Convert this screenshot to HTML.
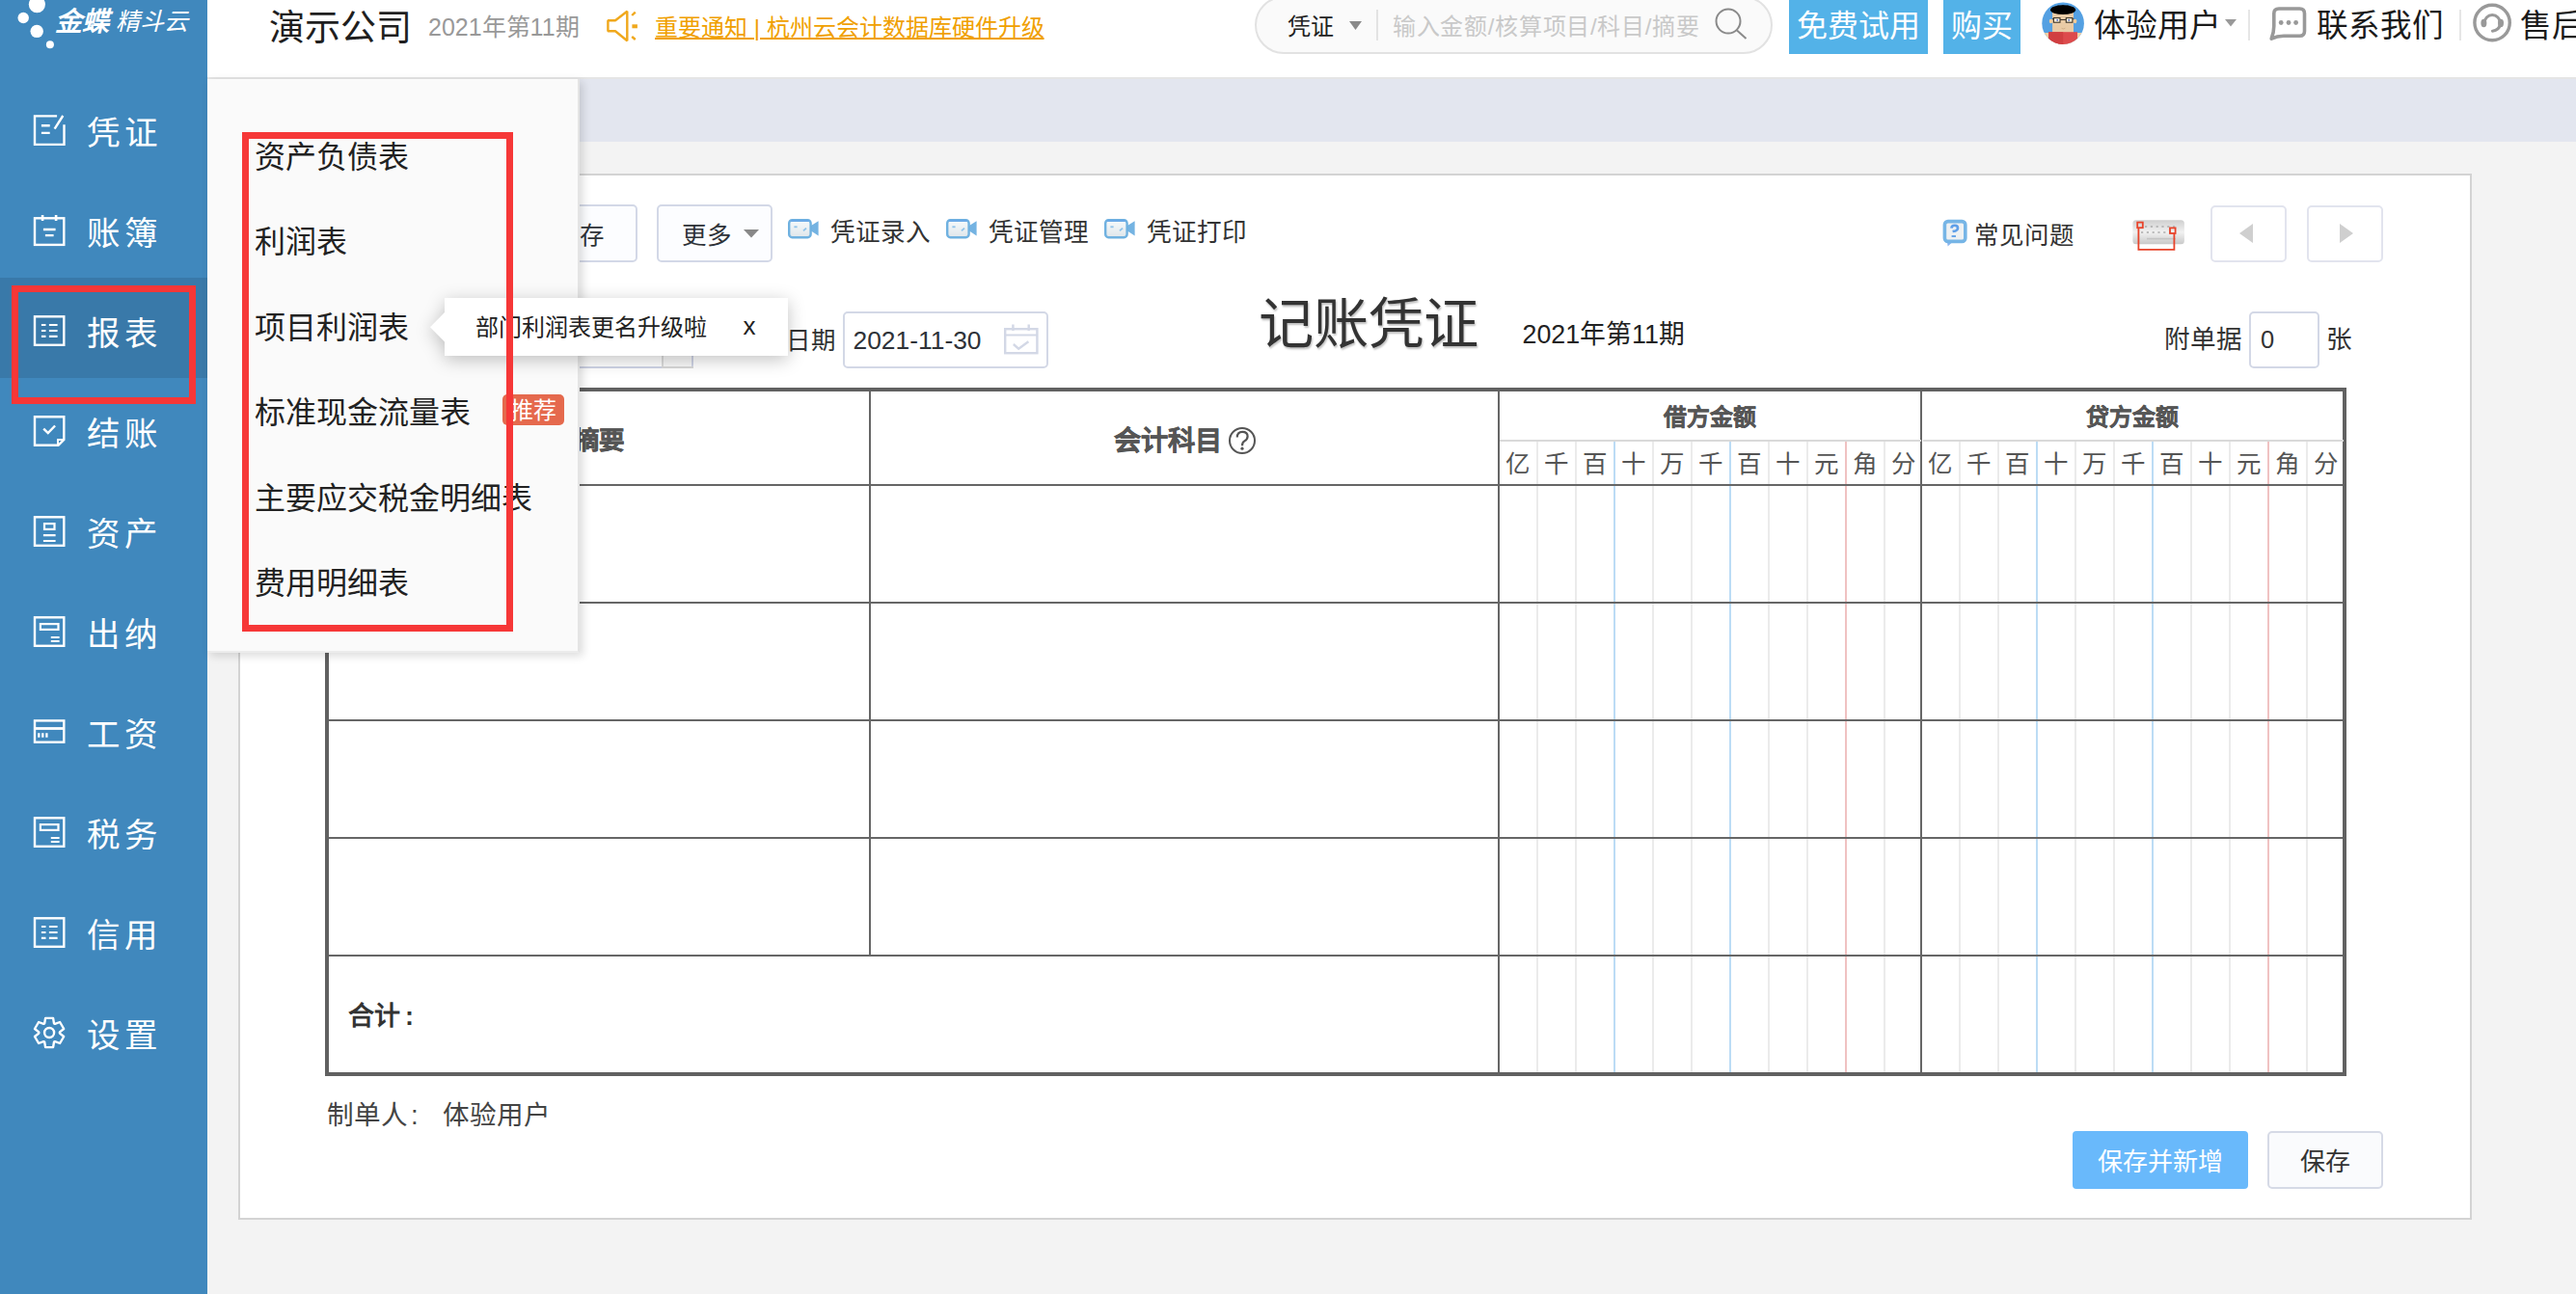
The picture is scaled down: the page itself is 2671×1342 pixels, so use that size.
<!DOCTYPE html>
<html lang="zh-CN">
<head>
<meta charset="utf-8">
<title>记账凭证</title>
<style>
*{box-sizing:border-box;margin:0;padding:0}
html,body{width:2671px;height:1342px;overflow:hidden;background:#f3f3f3;font-family:"Liberation Sans",sans-serif;color:#222}
body{position:relative}
.t{position:absolute;white-space:nowrap;line-height:1;transform:translateY(-50%)}
svg{position:absolute;overflow:visible}
/* sidebar */
#side{position:absolute;left:0;top:0;width:215px;height:1342px;background:#4088bd}
#side .act{position:absolute;left:0;top:288px;width:215px;height:104px;background:#3979a9}
#side .it{position:absolute;left:89.5px;font-size:34.5px;letter-spacing:5.5px;color:#fff;line-height:1;transform:translateY(-50%);white-space:nowrap}
#side svg.ic{left:34px;width:34px;height:34px;fill:none;stroke:#fff;stroke-width:2.4}
/* header */
#head{position:absolute;left:215px;top:0;width:2456px;height:82px;background:#fff;border-bottom:2px solid #e5e5e5}
#tabbar{position:absolute;left:215px;top:82px;width:2456px;height:65px;background:#e3e6ef}
#panel{position:absolute;left:247px;top:180px;width:2316px;height:1085px;background:#fff;border:2px solid #d3d3d3}
.btn{position:absolute;border:2px solid #d3d8e7;border-radius:5px;background:#fcfdff}
/* table */
.hl{position:absolute;height:2px;background:#666}
.vl{position:absolute;width:2px;background:#666}
.gl{position:absolute;width:2px;top:458px;height:654px;background:#ebebeb}
.gl.b{background:#bcdcf5}
.gl.r{background:#f0c2c2}
.u{position:absolute;top:482px;font-size:25.5px;color:#555;line-height:1;transform:translate(-50%,-50%)}
/* menu */
#menu{position:absolute;left:215px;top:82px;width:386px;height:595px;background:#fafafa;border-right:2px solid #e4e4e4;border-bottom:2px solid #ececec;box-shadow:3px 3px 9px rgba(0,0,0,.15)}
#menu .mi{position:absolute;left:49px;font-size:32px;color:#222;line-height:1;transform:translateY(-50%);white-space:nowrap}
.red{position:absolute;border:7px solid #f63737}
</style>
</head>
<body>
<div id="tabbar"></div>
<div id="panel"></div>
<!-- toolbar row -->
<div class="btn" style="left:541px;top:212px;width:120px;height:60px"></div>
<div class="t" style="left:575px;top:244.5px;font-size:25.5px;color:#2e3238">保存</div>
<div class="btn" style="left:681px;top:212px;width:120px;height:60px"></div>
<div class="t" style="left:706.5px;top:244.5px;font-size:25.5px;color:#2e3238">更多</div>
<svg style="left:771px;top:238px;width:16px;height:9px" viewBox="0 0 16 9"><path d="M0,0 H16 L8,8.4 Z" fill="#888"/></svg>
<svg width="0" height="0" style="left:0;top:0"><defs>
<linearGradient id="vg" x1="0" y1="0" x2="0" y2="1"><stop offset="0" stop-color="#f7fafc"/><stop offset="1" stop-color="#dfe6ea"/></linearGradient>
<g id="vid"><path d="M24,7 L31.6,2.2 V17.4 L24,12.6 Z" fill="#74b3e2"/><rect x="1.2" y="1.2" width="22.4" height="18" rx="3.2" fill="url(#vg)" stroke="#6fb1e0" stroke-width="2.4"/><path d="M3,2 H22" stroke="#6aa9e6" stroke-width="2"/><path d="M6.4,8.3 H9.6" stroke="#8fc3ea" stroke-width="1.8"/><path d="M16,12.4 L19,9.6" stroke="#8fc3ea" stroke-width="1.8"/></g>
</defs></svg>
<svg style="left:817px;top:227px;width:32px;height:21px" viewBox="0 0 32 21"><use href="#vid"/></svg>
<div class="t" style="left:860.7px;top:242.3px;font-size:25.6px;color:#333">凭证录入</div>
<svg style="left:981px;top:227px;width:32px;height:21px" viewBox="0 0 32 21"><use href="#vid"/></svg>
<div class="t" style="left:1024.7px;top:242.3px;font-size:25.6px;color:#333">凭证管理</div>
<svg style="left:1145px;top:227px;width:32px;height:21px" viewBox="0 0 32 21"><use href="#vid"/></svg>
<div class="t" style="left:1188.7px;top:242.3px;font-size:25.6px;color:#333">凭证打印</div>
<!-- right tools -->
<svg style="left:2014px;top:227px;width:27px;height:30px" viewBox="2014 227 27 30">
<path d="M2019,250 L2019.6,255.4 L2025.6,250 Z" fill="#8ab4f0"/>
<rect x="2016.4" y="229.6" width="21.4" height="20.8" rx="3.4" fill="#eef1f3" stroke="#76b5e6" stroke-width="3.6"/>
<path d="M2023.4,236.6 Q2023.6,233.8 2026.8,233.8 Q2030,233.8 2030,236.6 Q2030,238.6 2027.6,239.4 L2024.6,240" fill="none" stroke="#5f9fe8" stroke-width="2.6"/>
<path d="M2023.6,245 H2028" stroke="#6aa6e8" stroke-width="2"/>
</svg>
<div class="t" style="left:2047px;top:244.8px;font-size:25.5px;color:#333">常见问题</div>
<svg style="left:2210px;top:226px;width:58px;height:36px" viewBox="2210 226 58 36">
<defs><linearGradient id="kg" x1="0" y1="0" x2="0" y2="1"><stop offset="0" stop-color="#cfcfcf"/><stop offset=".5" stop-color="#f1f1f1"/><stop offset="1" stop-color="#c9c9c9"/></linearGradient></defs>
<rect x="2211.4" y="228.3" width="53.5" height="25" rx="3.5" fill="url(#kg)"/>
<path d="M2224,235 H2258 M2220,241 H2252" stroke="#aaa" stroke-width="1.6" stroke-dasharray="2.2 3.6"/>
<path d="M2226,247.6 H2256" stroke="#c4c4c4" stroke-width="1.6"/>
<g fill="none" stroke="#e8432a" stroke-width="1.8"><rect x="2216.2" y="230.6" width="5.6" height="5.6"/><rect x="2250" y="236.4" width="5.6" height="5.6"/><path d="M2217.4,236.2 V258.8 H2254.4 V242"/></g>
</svg>
<div class="btn" style="left:2291.5px;top:212.5px;width:79px;height:59px;border-color:#e2e4ee;background:#fff"></div>
<svg style="left:2322px;top:232px;width:14px;height:20px" viewBox="0 0 14 20"><path d="M14,0 V20 L0,10 Z" fill="#cfcfcf"/></svg>
<div class="btn" style="left:2391.5px;top:212.5px;width:79px;height:59px;border-color:#e2e4ee;background:#fff"></div>
<svg style="left:2426px;top:232px;width:14px;height:20px" viewBox="0 0 14 20"><path d="M0,0 V20 L14,10 Z" fill="#cfcfcf"/></svg>
<!-- voucher header row -->
<div class="btn" style="left:560px;top:323px;width:159px;height:59px;border-color:#cfd4e6;background:#fff;border-radius:4px"></div>
<div style="position:absolute;left:686px;top:325px;width:31px;height:55px;background:#f9f9f9;border-left:2px solid #dcdcdc"></div>
<div style="position:absolute;left:686px;top:380px;width:33px;height:2px;background:#d8d8d8"></div>
<svg style="left:696px;top:350px;width:13px;height:8px" viewBox="0 0 13 8"><path d="M0,0 H13 L6.5,8 Z" fill="#999"/></svg>
<div class="t" style="left:814.5px;top:353.5px;font-size:25.5px;color:#333">日期</div>
<div class="btn" style="left:873.5px;top:322.5px;width:213px;height:59px;background:#fff;border-color:#d3d8e6"></div>
<div class="t" style="left:884.5px;top:353px;font-size:26.4px;color:#2e3238">2021-11-30</div>
<svg style="left:1040px;top:335px;width:38px;height:34px" viewBox="1040 335 38 34" fill="none" stroke="#d3d8e6" stroke-width="2.4">
<rect x="1042.2" y="341.2" width="33.2" height="25"/><path d="M1042.2,347.4 H1075.4" stroke-width="2"/><path d="M1050.4,336.6 V343 M1066.7,336.6 V343"/><path d="M1050.8,357 L1056.2,361.6 L1066.4,354.2"/>
</svg>
<div class="t" style="left:1305px;top:336.5px;font-size:57.3px;color:#333;text-shadow:1px 2px 2px rgba(0,0,0,.25)">记账凭证</div>
<div class="t" style="left:1578.5px;top:346.5px;font-size:26.8px;color:#222">2021年第11期</div>
<div class="t" style="left:2244px;top:351.5px;font-size:26.6px;color:#333">附单据</div>
<div class="btn" style="left:2331.5px;top:322.5px;width:73px;height:59px;background:#fff;border-color:#d3d8e6"></div>
<div class="t" style="left:2344px;top:353px;font-size:25.5px;color:#333">0</div>
<div class="t" style="left:2412px;top:351.5px;font-size:26.6px;color:#333">张</div>
<!-- table -->
<div style="position:absolute;left:337px;top:402px;width:2096px;height:714px;border:4px solid #616161;background:#fff"></div>
<div class="hl" style="left:341px;top:502px;width:2088px"></div>
<div class="hl" style="left:341px;top:624px;width:2088px"></div>
<div class="hl" style="left:341px;top:746px;width:2088px"></div>
<div class="hl" style="left:341px;top:868px;width:2088px"></div>
<div class="hl" style="left:341px;top:990px;width:2088px"></div>
<div class="vl" style="left:901px;top:406px;height:586px"></div>
<div class="vl" style="left:1553px;top:406px;height:706px"></div>
<div class="vl" style="left:1991px;top:406px;height:706px"></div>
<div style="position:absolute;left:1555px;top:456px;width:437px;height:2px;background:#d9d9d9"></div>
<div style="position:absolute;left:1993.5px;top:456px;width:436px;height:2px;background:#d9d9d9"></div>
<div class="u" style="left:1574.0px">亿</div>
<div class="gl" style="left:1593px"></div>
<div class="u" style="left:1614.0px">千</div>
<div class="gl" style="left:1633px"></div>
<div class="u" style="left:1654.0px">百</div>
<div class="gl b" style="left:1673px"></div>
<div class="u" style="left:1694.0px">十</div>
<div class="gl" style="left:1713px"></div>
<div class="u" style="left:1734.0px">万</div>
<div class="gl" style="left:1753px"></div>
<div class="u" style="left:1774.0px">千</div>
<div class="gl b" style="left:1793px"></div>
<div class="u" style="left:1814.0px">百</div>
<div class="gl" style="left:1833px"></div>
<div class="u" style="left:1854.0px">十</div>
<div class="gl" style="left:1873px"></div>
<div class="u" style="left:1894.0px">元</div>
<div class="gl r" style="left:1913px"></div>
<div class="u" style="left:1934.0px">角</div>
<div class="gl" style="left:1953px"></div>
<div class="u" style="left:1974.0px">分</div>
<div class="u" style="left:2012.3px">亿</div>
<div class="gl" style="left:2031px"></div>
<div class="u" style="left:2052.3px">千</div>
<div class="gl" style="left:2071px"></div>
<div class="u" style="left:2092.3px">百</div>
<div class="gl b" style="left:2111px"></div>
<div class="u" style="left:2132.3px">十</div>
<div class="gl" style="left:2151px"></div>
<div class="u" style="left:2172.3px">万</div>
<div class="gl" style="left:2191px"></div>
<div class="u" style="left:2212.3px">千</div>
<div class="gl b" style="left:2231px"></div>
<div class="u" style="left:2252.3px">百</div>
<div class="gl" style="left:2271px"></div>
<div class="u" style="left:2292.3px">十</div>
<div class="gl" style="left:2311px"></div>
<div class="u" style="left:2332.3px">元</div>
<div class="gl r" style="left:2351px"></div>
<div class="u" style="left:2372.3px">角</div>
<div class="gl" style="left:2391px"></div>
<div class="u" style="left:2412.3px">分</div>
<div class="hl" style="left:1553px;top:502px;width:876px"></div>
<div class="hl" style="left:1553px;top:624px;width:876px"></div>
<div class="hl" style="left:1553px;top:746px;width:876px"></div>
<div class="hl" style="left:1553px;top:868px;width:876px"></div>
<div class="hl" style="left:1553px;top:990px;width:876px"></div>
<div class="t" style="left:594.5px;top:457px;font-size:26.5px;font-weight:bold;color:#555;-webkit-text-stroke:.5px #555">摘要</div>
<div class="t" style="left:1154.5px;top:457px;font-size:28.2px;font-weight:bold;color:#555;-webkit-text-stroke:.5px #555">会计科目</div>
<svg style="left:1273px;top:441.7px;width:30px;height:30px" viewBox="0 0 30 30" fill="none" stroke="#555" stroke-width="2"><circle cx="15" cy="15" r="13"/><path d="M9.8,11.5 Q9.8,5.8 15.2,5.8 Q20.6,5.8 20.6,10.4 Q20.6,13.5 17.4,15.4 Q15,16.8 15,20.2" stroke-width="2.2"/><circle cx="15" cy="23.2" r="1.6" fill="#555" stroke="none"/></svg>
<div class="t" style="left:1773px;top:432.5px;font-size:23.9px;font-weight:bold;color:#555;-webkit-text-stroke:.4px #555;transform:translate(-50%,-50%)">借方金额</div>
<div class="t" style="left:2211px;top:432.5px;font-size:23.9px;font-weight:bold;color:#555;-webkit-text-stroke:.4px #555;transform:translate(-50%,-50%)">贷方金额</div>
<div class="t" style="left:361px;top:1054px;font-size:27px;font-weight:bold;color:#333">合计<span style="margin-left:5px">:</span></div>
<!-- footer -->
<div class="t" style="left:339px;top:1157px;font-size:27.6px;color:#444">制单人<span style="margin-left:3px">:</span></div>
<div class="t" style="left:459px;top:1157px;font-size:27.6px;color:#444">体验用户</div>
<div style="position:absolute;left:2149px;top:1173px;width:182px;height:60px;border-radius:4px;background:#69b9fb"></div>
<div class="t" style="left:2240px;top:1204.5px;font-size:26px;color:#fff;transform:translate(-50%,-50%)">保存并新增</div>
<div class="btn" style="left:2351px;top:1173px;width:120px;height:60px;border-color:#d6dae6;background:#fafbfd"></div>
<div class="t" style="left:2411px;top:1204.5px;font-size:26px;color:#333;transform:translate(-50%,-50%)">保存</div>
<!-- header -->
<div id="head"></div>
<div class="t" style="left:278.5px;top:28.5px;font-size:37px;color:#1f1f1f">演示公司</div>
<div class="t" style="left:444px;top:28px;font-size:25px;color:#999">2021年第11期</div>
<svg style="left:626px;top:8px;width:40px;height:40px" viewBox="626 8 40 40" fill="none" stroke="#f0a81c" stroke-width="2.4">
<path d="M630.4,21.2 H638 L650.3,11.8 V42.2 L638,32.3 H630.4 Z" stroke-linejoin="bevel"/>
<path d="M655.2,16 L658.8,12.6 M655.2,38 L658.8,41"/>
<path d="M655.4,27.3 H660.9" stroke-width="4"/>
</svg>
<div class="t" style="left:679px;top:28.8px;font-size:24px;color:#f0a000;text-decoration:underline;text-decoration-thickness:2px;text-underline-offset:1.5px">重要通知 | 杭州云会计数据库硬件升级</div>
<!-- search pill -->
<div style="position:absolute;left:1301px;top:-4px;width:537px;height:60px;border:2px solid #e2e2e2;border-radius:30px;background:#fafafa"></div>
<div class="t" style="left:1335px;top:28px;font-size:24px;color:#222">凭证</div>
<svg style="left:1399px;top:22px;width:13px;height:9px" viewBox="0 0 13 9"><path d="M0,0 H13 L6.5,9 Z" fill="#8a8a8a"/></svg>
<div style="position:absolute;left:1427px;top:10px;width:2px;height:32px;background:#e3e3e3"></div>
<div class="t" style="left:1444px;top:28px;font-size:24px;letter-spacing:.7px;color:#c9c9c9">输入金额/核算项目/科目/摘要</div>
<svg style="left:1775px;top:5px;width:40px;height:40px" viewBox="1775 5 40 40" fill="none" stroke="#8a8a8a" stroke-width="2"><circle cx="1792" cy="22" r="12.5"/><path d="M1801,31.5 L1810.5,40"/></svg>
<!-- buttons -->
<div style="position:absolute;left:1855px;top:0;width:144px;height:56px;background:#53b2e8"></div>
<div class="t" style="left:1863px;top:27px;font-size:32px;color:#fff">免费试用</div>
<div style="position:absolute;left:2015px;top:0;width:80px;height:56px;background:#53b2e8"></div>
<div class="t" style="left:2023px;top:27px;font-size:32px;color:#fff">购买</div>
<!-- avatar -->
<svg style="left:2117px;top:2px;width:44px;height:44px" viewBox="2117 2 44 44">
<defs><clipPath id="avc"><circle cx="2139.1" cy="24.2" r="21.8"/></clipPath></defs>
<g clip-path="url(#avc)">
<rect x="2117" y="2" width="44" height="44" fill="#54a0e2"/>
<rect x="2119" y="34" width="40" height="14" fill="#f0cfa6"/>
<ellipse cx="2126.6" cy="22" rx="1.8" ry="2.2" fill="#f3cc9a"/><ellipse cx="2151.6" cy="22" rx="1.8" ry="2.2" fill="#f3cc9a"/>
<rect x="2128.1" y="13" width="21.9" height="21" fill="#e9cba6"/>
<rect x="2124.2" y="33.2" width="29.8" height="14" fill="#dd4a4c"/>
<rect x="2124.2" y="33.2" width="15" height="14" fill="#d13f41"/>
<ellipse cx="2139.1" cy="10.2" rx="13" ry="4.9" fill="#000"/>
<circle cx="2129.5" cy="9.4" r="2.2"/><circle cx="2134" cy="8.2" r="2.4"/><circle cx="2139" cy="7.8" r="2.4"/><circle cx="2144" cy="8.2" r="2.4"/><circle cx="2148.6" cy="9.4" r="2.2"/>
<rect x="2129.4" y="18.6" width="6.6" height="4.6" fill="#fbf3dc" stroke="#3b3327" stroke-width="1.1"/>
<rect x="2142.3" y="18.6" width="6.6" height="4.6" fill="#fbf3dc" stroke="#3b3327" stroke-width="1.1"/>
<path d="M2136,20.5 H2142.3 M2128,19.6 L2129.4,20 M2150.3,19.6 L2148.9,20" stroke="#3b3327" stroke-width="1"/>
<circle cx="2133.2" cy="20.8" r="0.9" fill="#3a55c8"/><circle cx="2145.2" cy="20.8" r="0.9" fill="#3a55c8"/>
<path d="M2137.6,29.3 Q2139.4,30.6 2141.4,29.2" stroke="#c9a67e" stroke-width="0.7" fill="none"/>
</g></svg>
<div class="t" style="left:2170.5px;top:27px;font-size:32.8px;color:#1a1a1a">体验用户</div>
<svg style="left:2307px;top:20px;width:12px;height:8px" viewBox="0 0 12 8"><path d="M0,0 H12 L6,7.6 Z" fill="#999"/></svg>
<div style="position:absolute;left:2331px;top:10px;width:2px;height:32px;background:#e6e6e6"></div>
<svg style="left:2350px;top:4px;width:46px;height:42px" viewBox="2350 4 46 42" fill="none" stroke="#999" stroke-width="3.6" stroke-linejoin="round">
<path d="M2363,9 H2384.5 Q2389.5,9 2389.5,14 V32.3 Q2389.5,37.3 2384.5,37.3 H2368 Q2361,37.3 2355.2,40.2 Q2357.8,33 2357.8,27 V14 Q2357.8,9 2363,9 Z"/>
<g fill="#999" stroke="none"><circle cx="2365.2" cy="23.5" r="2.4"/><circle cx="2373" cy="23.5" r="2.4"/><circle cx="2380.6" cy="23.5" r="2.4"/></g></svg>
<div class="t" style="left:2401.5px;top:27px;font-size:32.6px;color:#1a1a1a">联系我们</div>
<div style="position:absolute;left:2550px;top:10px;width:2px;height:32px;background:#e6e6e6"></div>
<svg style="left:2562px;top:2px;width:44px;height:44px" viewBox="2562 2 44 44" fill="none" stroke="#999" stroke-width="3.4" stroke-linecap="round">
<circle cx="2584.1" cy="23.5" r="18.2"/>
<path d="M2576,24 A8.2,8.6 0 0 1 2592.4,24" stroke-width="3"/>
<path d="M2592.4,25 Q2591.4,31.4 2584.4,32.2" stroke-width="3"/>
<g fill="#999" stroke="none"><ellipse cx="2575.4" cy="24" rx="3" ry="4.2"/><ellipse cx="2593" cy="24" rx="3" ry="4.2"/></g></svg>
<div class="t" style="left:2612.5px;top:27px;font-size:32.6px;color:#1a1a1a">售后</div>
<!-- sidebar -->
<div id="side">
<div class="act"></div>
<svg style="left:0;top:0;width:215px;height:80px" viewBox="0 0 215 80"><g fill="#fff"><circle cx="38.4" cy="4.6" r="8.6"/><circle cx="24.2" cy="18.5" r="5.7"/><circle cx="38.2" cy="32.4" r="6.7"/><circle cx="51.9" cy="46.3" r="4"/></g></svg>
<div class="t" style="left:57px;top:23px;font-size:28px;font-weight:bold;font-style:italic;color:#fff;transform:translateY(-50%)">金蝶</div>
<div class="t" style="left:120px;top:22px;font-size:25px;font-style:italic;color:#fff;transform:translateY(-50%)">精斗云</div>
<svg class="ic" style="top:119px" viewBox="0 0 34 34"><path d="M25.1,1.4 H2 V30.9 H32.5 V10.2"/><path d="M31.3,1 L22.6,14.6"/><path d="M8.9,11.2 H17.7 M8.9,18.9 H17.7"/></svg>
<div class="it" style="top:138px">凭证</div>
<svg class="ic" style="top:223px" viewBox="0 0 34 34"><rect x="2" y="3.3" width="30.3" height="27.6"/><path d="M10.1,0 V5.9 M24.1,0 V5.9" stroke-width="2.6"/><path d="M10.9,15 H23.6 M12.9,21.1 H21.6"/></svg>
<div class="it" style="top:242px">账簿</div>
<svg class="ic" style="top:327px" viewBox="0 0 34 34"><rect x="2" y="1.3" width="30.3" height="29.5"/><path d="M8.9,10 H13.5 M16.9,10 H25.6 M8.9,16 H13.5 M16.9,16 H25.6 M8.9,21.9 H13.5 M16.9,21.9 H25.6" stroke-width="2.2"/></svg>
<div class="it" style="top:346px">报表</div>
<svg class="ic" style="top:431px" viewBox="0 0 34 34"><path d="M2,1.3 H32.3 V25 L26.5,30.8 H2 Z"/><path d="M26,30.8 V25 H32.3" stroke-width="2"/><path d="M11.2,13.6 L15.8,18.1 L23.1,10.5"/></svg>
<div class="it" style="top:450px">结账</div>
<svg class="ic" style="top:535px" viewBox="0 0 34 34"><rect x="2" y="1.3" width="30.3" height="29.5"/><rect x="12" y="8.1" width="10.5" height="5.8" stroke-width="2.2"/><path d="M10.9,20.1 H23.6 M10.9,26 H23.6" stroke-width="2.2"/></svg>
<div class="it" style="top:554px">资产</div>
<svg class="ic" style="top:639px" viewBox="0 0 34 34"><rect x="2" y="1.3" width="30.3" height="29.5"/><rect x="7.9" y="8.1" width="18.6" height="5.8" stroke-width="2.2"/><path d="M18.8,22 H27.6 M18.8,26 H27.6" stroke-width="2"/></svg>
<div class="it" style="top:658px">出纳</div>
<svg class="ic" style="top:743px" viewBox="0 0 34 34"><rect x="2" y="4.4" width="30.3" height="22.3"/><path d="M2,12.5 H32.3" stroke-width="2.8"/><path d="M6.3,17.2 V21.7 M10.3,17.2 V21.7 M14.4,17.2 V21.7" stroke-width="2.3"/></svg>
<div class="it" style="top:762px">工资</div>
<svg class="ic" style="top:847px" viewBox="0 0 34 34"><rect x="2" y="1.3" width="30.3" height="29.5"/><rect x="7.9" y="8.1" width="18.6" height="5.8" stroke-width="2.2"/><path d="M18.8,22 H27.6 M18.8,26 H27.6" stroke-width="2"/></svg>
<div class="it" style="top:866px">税务</div>
<svg class="ic" style="top:951px" viewBox="0 0 34 34"><rect x="2" y="1.3" width="30.3" height="29.5"/><path d="M8.9,10 H13.5 M16.9,10 H25.6 M8.9,16 H13.5 M16.9,16 H25.6 M8.9,21.9 H13.5 M16.9,21.9 H25.6" stroke-width="2.2"/></svg>
<div class="it" style="top:970px">信用</div>
<svg class="ic" style="top:1055px" viewBox="0 0 34 34"><path d="M12.2,6.4 L13.1,0.9 L21.1,0.9 L22.0,6.4 L23.0,6.9 L28.1,5.0 L32.2,12.0 L27.9,15.4 L27.9,16.6 L32.2,20.0 L28.1,27.0 L23.0,25.1 L22.0,25.6 L21.1,31.1 L13.1,31.1 L12.2,25.6 L11.2,25.1 L6.1,27.0 L2.0,20.0 L6.3,16.6 L6.3,15.4 L2.0,12.0 L6.1,5.0 L11.2,6.9 Z" stroke-linejoin="round"/><circle cx="17.1" cy="16.0" r="5"/></svg>
<div class="it" style="top:1074px">设置</div>
<div class="red" style="left:12px;top:296px;width:191px;height:123px"></div>
</div>
<!-- dropdown menu -->
<div id="menu">
<div class="mi" style="top:81px">资产负债表</div>
<div class="mi" style="top:169px">利润表</div>
<div class="mi" style="top:258px">项目利润表</div>
<div class="mi" style="top:346px">标准现金流量表</div>
<div class="mi" style="top:435px">主要应交税金明细表</div>
<div class="mi" style="top:523px">费用明细表</div>
<div style="position:absolute;left:306px;top:327px;width:64px;height:32px;border-radius:5px;background:#e5694d"></div>
<div class="t" style="left:338px;top:343.6px;font-size:24px;color:#fff;transform:translate(-50%,-50%)">推荐</div>
</div>
<!-- tooltip -->
<div style="position:absolute;left:0;top:0;width:0;height:0;filter:drop-shadow(0 4px 9px rgba(0,0,0,.24))">
<div style="position:absolute;left:460.5px;top:308.5px;width:356.5px;height:60.5px;background:#fff"></div>
<svg style="left:445.5px;top:322.5px;width:16px;height:32.5px" viewBox="0 0 16 32.5"><path d="M16,0 L0,16.25 L16,32.5 Z" fill="#fff"/></svg>
</div>
<div class="t" style="left:492.5px;top:340px;font-size:24px;color:#222">部门利润表更名升级啦</div>
<div class="t" style="left:770.5px;top:337.5px;font-size:26px;color:#222">x</div>
<!-- red annotation box -->
<div class="red" style="left:251px;top:137px;width:281px;height:518px"></div>
</body>
</html>
